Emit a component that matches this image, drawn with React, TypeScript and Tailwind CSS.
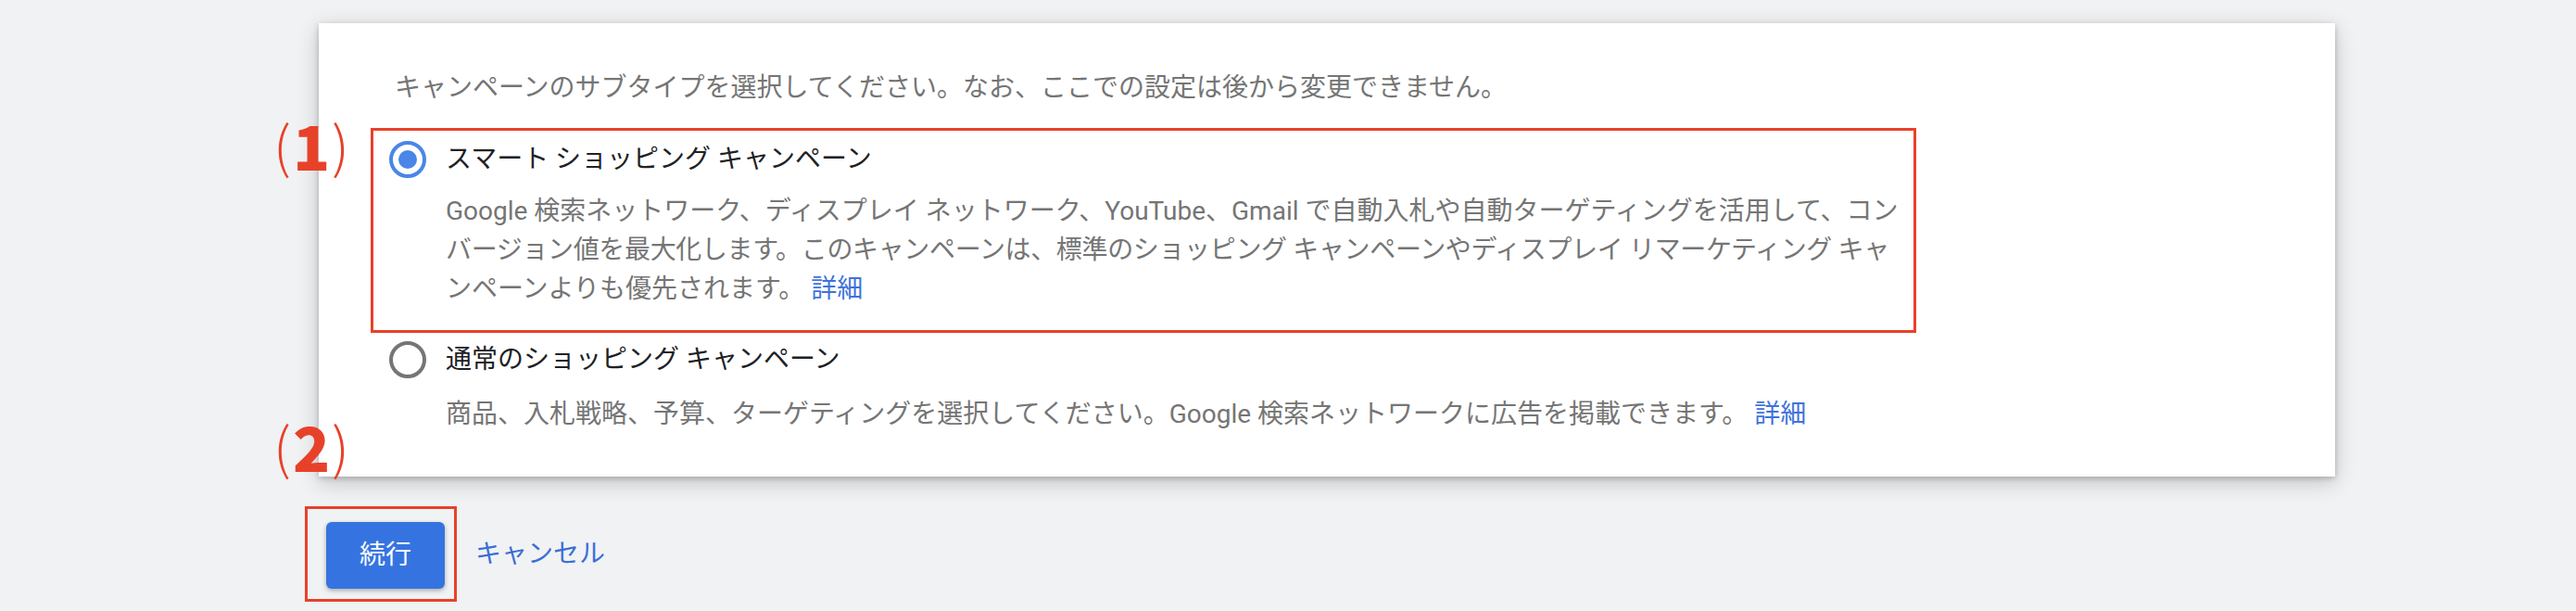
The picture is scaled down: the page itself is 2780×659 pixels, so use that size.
import { ReactNode } from "react";

const jp = "font-['Roboto','Noto_Sans_CJK_JP',sans-serif]";

function Radio({ checked }: { checked: boolean }) {
  return checked ? (
    <span className="w-10 h-10 shrink-0 rounded-full border-4 border-[#4a86e8] flex items-center justify-center">
      <span className="w-5 h-5 rounded-full bg-[#4a86e8]" />
    </span>
  ) : (
    <span className="w-10 h-10 shrink-0 rounded-full border-4 border-[#757575]" />
  );
}

function Option({
  checked,
  label,
  children,
}: {
  checked: boolean;
  label: string;
  children: ReactNode;
}) {
  return (
    <div>
      <div className="flex items-center gap-[21px]">
        <Radio checked={checked} />
        <span className="text-[28px] leading-[42px] text-[#202124]">
          {label}
        </span>
      </div>
      <p className="pl-[61px] text-[28px] leading-[42px] text-[#757575] whitespace-nowrap">
        {children}
      </p>
    </div>
  );
}

function Mark({ n, top }: { n: string; top: string }) {
  return (
    <div
      className={`absolute left-[295px] ${top} flex items-center text-[#e8412a] font-['Noto_Sans_CJK_JP',sans-serif] leading-none`}>
      <span className="text-[60px] font-light">(</span>
      <span className="text-[66px] font-black mx-[2px]">{n}</span>
      <span className="text-[60px] font-light">)</span>
    </div>
  );
}

export default function App() {
  return (
    <div
      className={`relative w-full h-[659px] overflow-hidden bg-[#f1f2f4] pt-[25px] pl-[329px] ${jp}`}>
      <div className="ml-[15px] w-[2176px] h-[489px] bg-white pl-[56px] pt-[49px] shadow-[0_6px_22px_rgba(0,0,0,0.2),0_2px_6px_rgba(0,0,0,0.2)]">
        <p className="pl-[26px] text-[28px] leading-[42px] text-[#757575]">
          キャンペーンのサブタイプを選択してください。なお、ここでの設定は後から変更できません。
        </p>
        <div className="mt-[22px] w-[1668px] border-[3px] border-[#e8412a] pl-[17px] pt-[10px] pb-[23px]">
          <Option checked label="スマート ショッピング キャンペーン">
            <span className="block mt-[14px]">
              Google 検索ネットワーク、ディスプレイ ネットワーク、YouTube、Gmail
              で自動入札や自動ターゲティングを活用して、コン
              <br />
              <span className="tracking-[-0.35px]">
                バージョン値を最大化します。このキャンペーンは、標準のショッピング
                キャンペーンやディスプレイ リマーケティング キャ
              </span>
              <br />
              ンペーンよりも優先されます。{" "}
              <a className="text-[#3f72dc]">詳細</a>
            </span>
          </Option>
        </div>
        <div className="pl-[20px] mt-[8px]">
          <Option checked={false} label="通常のショッピング キャンペーン">
            <span className="block mt-[17px]">
              商品、入札戦略、予算、ターゲティングを選択してください。Google
              検索ネットワークに広告を掲載できます。{" "}
              <a className="text-[#3f72dc]">詳細</a>
            </span>
          </Option>
        </div>
      </div>

      <div className="mt-[32px] flex items-center">
        <div className="border-[3px] border-[#e8412a] pl-[20px] pr-[10px] pt-[14px] pb-[11px]">
          <button className="w-[128px] h-[72px] rounded-[6px] bg-[#3574e0] text-white text-[28px] shadow-[0_2px_5px_rgba(0,0,0,0.3)]">
            続行
          </button>
        </div>
        <a className="ml-[20px] text-[28px] text-[#3b6ed6]">キャンセル</a>
      </div>

      <Mark n="1" top="top-[122px]" />
      <Mark n="2" top="top-[447px]" />
    </div>
  );
}
